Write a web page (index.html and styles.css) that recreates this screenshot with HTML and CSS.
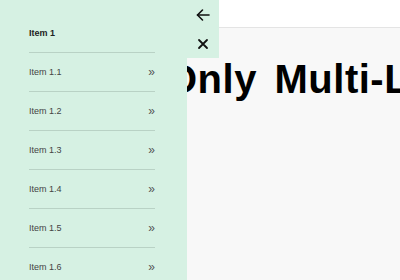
FILE: index.html
```html
<!DOCTYPE html>
<html lang="en">
<head>
    <meta charset="UTF-8">
    <meta name="viewport" content="width=device-width, initial-scale=1.0">
    <title>Multi-level Menu</title>
    <link rel="stylesheet" href="styles.css">
</head>
<body>
    <header class="topbar"></header>

    <main class="content">
        <h1 class="title">Only Multi-Level Menu</h1>
    </main>

    <nav class="drawer">
        <ul class="drawer-list">
            <li class="drawer-item drawer-head">Item 1</li>
            <li class="drawer-item">Item 1.1 <span class="more">&raquo;</span></li>
            <li class="drawer-item">Item 1.2 <span class="more">&raquo;</span></li>
            <li class="drawer-item">Item 1.3 <span class="more">&raquo;</span></li>
            <li class="drawer-item">Item 1.4 <span class="more">&raquo;</span></li>
            <li class="drawer-item">Item 1.5 <span class="more">&raquo;</span></li>
            <li class="drawer-item">Item 1.6 <span class="more">&raquo;</span></li>
        </ul>

        <div class="drawer-tools">
            <button class="tool-btn" aria-label="Back">
                <svg width="16" height="16" viewBox="0 0 16 16" fill="none" stroke="#111" stroke-width="1.6" stroke-linecap="round" stroke-linejoin="round">
                    <path d="M14 8H2.5"/>
                    <path d="M7.5 3L2.5 8l5 5"/>
                </svg>
            </button>
            <button class="tool-btn" aria-label="Close">
                <svg width="12" height="12" viewBox="0 0 12 12" fill="none" stroke="#111" stroke-width="1.8" stroke-linecap="round">
                    <path d="M2 2l8 8M10 2l-8 8"/>
                </svg>
            </button>
        </div>
    </nav>
</body>
</html>
```

FILE: styles.css
```css
* {
    margin: 0;
    padding: 0;
    box-sizing: border-box;
}

body {
    background-color: #f8f8f8;
    font-family: "Liberation Sans", Arial, sans-serif;
    overflow: hidden;
}

.topbar {
    height: 28px;
    background-color: #fff;
    border-bottom: 1px solid #e4e4e4;
}

.content {
    padding: 28px 0 0 166px;
    overflow: hidden;
}

.title {
    font-family: "Liberation Sans", Arial, sans-serif;
    font-size: 40px;
    font-weight: 700;
    color: #000;
    line-height: 46px;
    letter-spacing: 0.5px;
    word-spacing: 6px;
    white-space: nowrap;
}

/* drawer sits over the page */
.drawer {
    position: fixed;
    top: 0;
    left: 0;
    width: 187px;
    height: 100%;
    background-color: #d6f1e3;
    padding: 14px 32px 0 29px;
}

.drawer-list {
    list-style: none;
}

.drawer-item {
    display: flex;
    justify-content: space-between;
    align-items: center;
    height: 39px;
    border-bottom: 1px solid #b9d2c5;
    font-size: 9px;
    color: #444;
}

.drawer-head {
    font-weight: bold;
    color: #222;
}

.more {
    font-size: 12px;
    color: #555;
    padding-bottom: 1px;
}

.drawer-tools {
    position: absolute;
    top: 0;
    left: 187px;
    width: 32px;
    height: 58px;
    background-color: #d6f1e3;
    display: flex;
    flex-direction: column;
}

.tool-btn {
    flex: 1;
    border: none;
    background: none;
    display: flex;
    align-items: center;
    justify-content: center;
    cursor: pointer;
}
```
